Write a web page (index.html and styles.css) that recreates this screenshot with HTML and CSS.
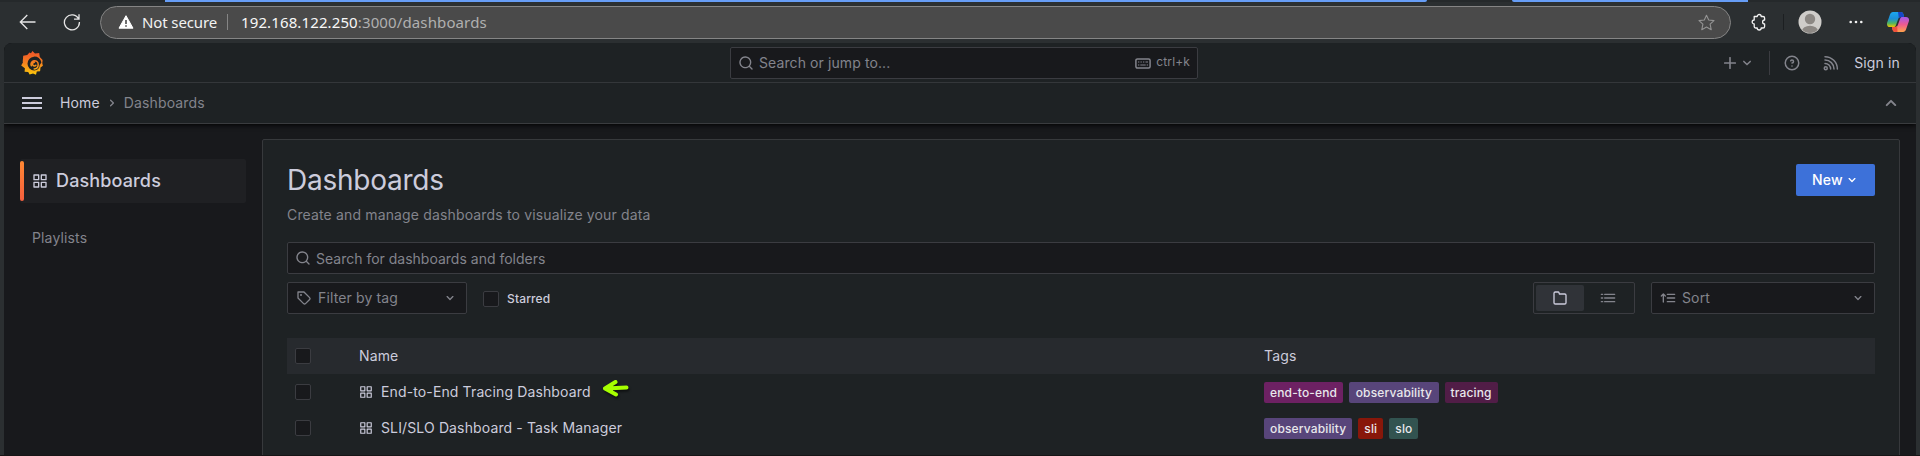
FILE: index.html
```html
<!DOCTYPE html>
<html lang="en">
<head>
<meta charset="utf-8">
<title>Dashboards - Grafana</title>
<link rel="stylesheet" href="styles.css">
</head>
<body>
<svg class="defs" width="0" height="0">
  <defs>
    <symbol id="apps" viewBox="0 0 24 24"><path fill="currentColor" d="M10,13H3a1,1,0,0,0-1,1v7a1,1,0,0,0,1,1h7a1,1,0,0,0,1-1V14A1,1,0,0,0,10,13ZM9,20H4V15H9ZM21,2H14a1,1,0,0,0-1,1v7a1,1,0,0,0,1,1h7a1,1,0,0,0,1-1V3A1,1,0,0,0,21,2ZM20,9H15V4h5Zm1,4H14a1,1,0,0,0-1,1v7a1,1,0,0,0,1,1h7a1,1,0,0,0,1-1V14A1,1,0,0,0,21,13Zm-1,7H15V15h5ZM10,2H3A1,1,0,0,0,2,3v7a1,1,0,0,0,1,1h7a1,1,0,0,0,1-1V3A1,1,0,0,0,10,2ZM9,9H4V4H9Z"/></symbol>
    <symbol id="search" viewBox="0 0 24 24"><path fill="currentColor" d="M21.71,20.29,18,16.61A9,9,0,1,0,16.61,18l3.68,3.68a1,1,0,0,0,1.42,0A1,1,0,0,0,21.71,20.29ZM11,18a7,7,0,1,1,7-7A7,7,0,0,1,11,18Z"/></symbol>
    <symbol id="down" viewBox="0 0 24 24"><path fill="currentColor" d="M17,9.17a1,1,0,0,0-1.41,0L12,12.71,8.46,9.17a1,1,0,0,0-1.41,0,1,1,0,0,0,0,1.42l4.24,4.24a1,1,0,0,0,1.42,0L17,10.59A1,1,0,0,0,17,9.17Z"/></symbol>
    <symbol id="up" viewBox="0 0 24 24"><path fill="currentColor" d="M17,13.41,12.71,9.17a1,1,0,0,0-1.42,0L7.05,13.41a1,1,0,0,0,0,1.42,1,1,0,0,0,1.41,0L12,11.29l3.54,3.54a1,1,0,0,0,.7.29,1,1,0,0,0,.71-.29A1,1,0,0,0,17,13.41Z"/></symbol>
    <symbol id="right" viewBox="0 0 24 24"><path fill="currentColor" d="M14.83,11.29,10.59,7.05a1,1,0,0,0-1.42,0,1,1,0,0,0,0,1.41L12.71,12,9.17,15.54a1,1,0,0,0,0,1.41,1,1,0,0,0,.71.29,1,1,0,0,0,.71-.29l4.24-4.24A1,1,0,0,0,14.83,11.29Z"/></symbol>
    <linearGradient id="flame" gradientUnits="userSpaceOnUse" x1="0" y1="0" x2="0" y2="24"><stop offset="0.1" stop-color="#f05a28"/><stop offset="0.5" stop-color="#f58220"/><stop offset="1" stop-color="#fbca0a"/></linearGradient>
    <linearGradient id="cpA" x1="0" y1="0" x2="0" y2="1"><stop offset="0" stop-color="#1ba7f0"/><stop offset="0.45" stop-color="#1c8fd8"/><stop offset="0.75" stop-color="#4fb55f"/><stop offset="1" stop-color="#f2c500"/></linearGradient>
    <linearGradient id="cpB" x1="0" y1="0" x2="0" y2="1"><stop offset="0" stop-color="#a259ee"/><stop offset="0.5" stop-color="#ee5a90"/><stop offset="1" stop-color="#ffa34a"/></linearGradient>
  </defs>
</svg>
<div class="browser">
  <div class="tabstrip"><span class="tabline tabline-a"></span><span class="tabline tabline-b"></span></div>
  <div class="toolbar">
    <svg class="back" width="18" height="16" viewBox="0 0 18 16"><path d="M16.5 8H1.5M8.3 1L1.3 8l7 7" fill="none" stroke="#e6e6e6" stroke-width="1.3"/></svg>
    <svg class="reload" width="18" height="18" viewBox="0 0 18 18"><path d="M15.7 6.2A7.5 7.5 0 1 0 16.4 9M16 1.2v5h-5" fill="none" stroke="#e6e6e6" stroke-width="1.3"/></svg>
    <div class="address">
      <svg class="warn" width="16" height="14" viewBox="0 0 16 14"><path d="M8 .7L15 13.2H1z" fill="#fff" stroke="#fff" stroke-linejoin="round"/><path d="M8 5v4M8 10.2v1.6" stroke="#4a4a4a" stroke-width="1.6"/></svg>
      <span class="insecure">Not secure</span>
      <span class="divider"></span>
      <span class="url"><b>192.168.122.250</b>:3000/dashboards</span>
      <svg class="star" width="17" height="17" viewBox="0 0 17 17"><path d="M8.5 1.2l2.2 4.8 5.3.6-3.9 3.6 1.1 5.5-4.7-2.7-4.7 2.7 1.1-5.5L1 6.600l5.300-.6z" fill="none" stroke="#949494" stroke-width="1.1" stroke-linejoin="round"/></svg>
    </div>
    <svg class="puzzle" width="16" height="18" viewBox="0 0 16 18"><path d="M3.200 3.500h3a2 2 0 0 1 4 0H12a1.600 1.600 0 0 1 1.600 1.600V7a2 2 0 0 0 0 4v2.400A1.600 1.600 0 0 1 12 15h-1.800a2 2 0 0 1-4 0H4.800a1.600 1.600 0 0 1-1.600-1.600V11a2 2 0 0 1 0-4z" fill="none" stroke="#f2f2f2" stroke-width="1.300" stroke-linejoin="round"/></svg>
    <span class="tool-divider"></span>
    <svg class="avatar" width="24" height="24" viewBox="0 0 24 24"><clipPath id="avc"><circle cx="12" cy="12" r="11"/></clipPath><circle cx="12" cy="12" r="11.500" fill="#cfcdca"/><circle cx="12" cy="9" r="5.200" fill="#8c8884"/><ellipse cx="12" cy="21" rx="8" ry="5.200" fill="#8c8884" clip-path="url(#avc)"/></svg>
    <svg class="more" width="14" height="4" viewBox="0 0 14 4"><g fill="#f2f2f2"><circle cx="1.700" cy="2" r="1.300"/><circle cx="7" cy="2" r="1.300"/><circle cx="12.300" cy="2" r="1.300"/></g></svg>
    <svg class="copilot" width="22" height="20" viewBox="0 0 22 20"><path d="M6 0h8c1.500 0 2 1 2.500 2.500L17 5h-3c-2 0-2.500 1-3 2.500L9 13c-.6 1.700-1.200 2-3 2H3c-2.500 0-3.500-2-2.800-4.500L3 2.500C3.500 1 4.500 0 6 0z" fill="url(#cpA)"/><path d="M11 0h3c1.500 0 2 1 2.500 2.500L17 5h-3c-1 0-1.700.3-2.200 1z" fill="#1746c8"/><path d="M16 20H8c-1.500 0-2-1-2.500-2.500L5 15h3c2 0 2.500-1 3-2.500L13 7c.6-1.700 1.200-2 3-2h3c2.500 0 3.500 2 2.800 4.500L19 17.500c-.5 1.500-1.500 2.500-3 2.500z" fill="url(#cpB)"/><path d="M10.500 20H8c-1.500 0-2-1-2.500-2.500L5 15h3c1 0 1.700-.3 2.200-1z" fill="#f0503c"/></svg>
  </div>
</div>
<div class="app">
  <header class="header">
    <div class="topbar">
      <svg class="logo" width="22" height="24" viewBox="0 0 22 24"><path fill="url(#flame)" d="M11.400 0L14 2.500l4.200-.6.600 4L21.600 9l-.3 3.200.6 2.600-2.400 1.800-.4 3.600-3.300.3L15 23.800l-3-1.200-3.400.8-1.400-2.400-3.600-.3.300-3.400L.2 14.500 2 11.300l-.3-.6L2.200 4.800l4-.8L8.500 1.600l1.500.6z"/><path d="M20.400 11.500A7 7 0 1 0 13.200 19.600 6 6 0 0 0 18.700 14z" fill="#1e2224"/><path d="M14.900 14.300a1.900 1.900 0 1 1-1.500-3.100M10.300 14.700a3.600 3.600 0 1 1 6.900-1.300c0 2.500-1.700 4.300-4 4.600" fill="none" stroke="url(#flame)" stroke-width="1.500" stroke-linecap="round"/></svg>
      <div class="jump">
        <svg class="i16" viewBox="0 0 24 24"><use href="#search"/></svg>
        <span class="jump-text">Search or jump to...</span>
        <svg class="keyboard" width="16" height="11" viewBox="0 0 16 11"><rect x=".9" y=".9" width="14.200" height="9.200" rx="1.500" fill="none" stroke="currentColor" stroke-width="1.500"/><path d="M3 4h1.300M5.500 4h1.300M8 4h1.300M10.500 4h2.500M3 7h1.300M5.300 7h5.400M11.700 7H13" stroke="currentColor" stroke-width="1.200"/></svg>
        <span class="kbd">ctrl+k</span>
      </div>
      <div class="actions">
        <svg class="plus" width="12" height="12" viewBox="0 0 12 12"><path d="M6 .7v10.600M.7 6h10.600" stroke="currentColor" stroke-width="1.600" stroke-linecap="round"/></svg>
        <svg class="i18 plus-down" viewBox="0 0 24 24"><use href="#down"/></svg>
        <span class="bar-divider"></span>
        <svg class="i18 help" viewBox="0 0 24 24"><path fill="currentColor" d="M11.290,15.290a1.580,1.580,0,0,0-.12.150.76.760,0,0,0-.09.180.64.640,0,0,0-.06.180,1.360,1.360,0,0,0,0,.2.840.840,0,0,0,.08.380.9.900,0,0,0,.54.540.94.940,0,0,0,.76,0,.9.900,0,0,0,.54-.54A1,1,0,0,0,13,16a1,1,0,0,0-.29-.71A1,1,0,0,0,11.290,15.290ZM12,2A10,10,0,1,0,22,12,10,10,0,0,0,12,2Zm0,18a8,8,0,1,1,8-8A8,8,0,0,1,12,20ZM12,7A3,3,0,0,0,9.400,8.500a1,1,0,1,0,1.730,1A1,1,0,0,1,12,9a1,1,0,0,1,0,2,1,1,0,1,0,0,2,3,3,0,0,0,0-6Z"/></svg>
        <svg class="i18 rss" viewBox="0 0 24 24"><g fill="none" stroke="currentColor" stroke-width="2" stroke-linecap="round"><circle cx="5" cy="19" r="2"/><path d="M4 12.500A7.500 7.500 0 0 1 11.500 20M4 8A12 12 0 0 1 16 20M4 3.500A16.500 16.500 0 0 1 20.500 20"/></g></svg>
        <span class="signin">Sign in</span>
      </div>
    </div>
    <nav class="crumbs">
      <svg class="menu" width="20" height="12" viewBox="0 0 20 12"><path d="M0 1h20M0 6h20M0 11h20" stroke="#ccccdc" stroke-width="2"/></svg>
      <span class="home">Home</span>
      <svg class="i16" viewBox="0 0 24 24"><use href="#right"/></svg>
      <span class="current">Dashboards</span>
      <svg class="collapse" viewBox="0 0 24 24"><use href="#up"/></svg>
    </nav>
  </header>
  <div class="body">
    <aside class="sidebar">
      <div class="section"><span class="accent"></span><svg class="i16" viewBox="0 0 24 24"><use href="#apps"/></svg><span>Dashboards</span></div>
      <div class="playlists">Playlists</div>
    </aside>
    <main class="panel">
      <div class="heading"><h1>Dashboards</h1><button class="new"><span>New</span><svg class="i16" viewBox="0 0 24 24"><use href="#down"/></svg></button></div>
      <p class="subtitle">Create and manage dashboards to visualize your data</p>
      <div class="field search"><svg class="i16" viewBox="0 0 24 24"><use href="#search"/></svg><span>Search for dashboards and folders</span></div>
      <div class="filters">
        <div class="field tagfilter"><svg class="i16" viewBox="0 0 24 24"><path fill="currentColor" d="M7.500,6A1.500,1.500,0,1,0,9,7.500,1.500,1.500,0,0,0,7.500,6Zm13.620,4.710L12.710,2.290A1,1,0,0,0,12,2H3A1,1,0,0,0,2,3v9a1,1,0,0,0,.29.710l8.420,8.410a3,3,0,0,0,4.240,0L21.120,15a3,3,0,0,0,0-4.240Zm-1.410,2.820h0l-6.180,6.170a1,1,0,0,1-1.410,0L4,11.590V4h7.590l8.120,8.120a1,1,0,0,1,.29.710A1,1,0,0,1,19.710,13.530Z"/></svg><span class="grow">Filter by tag</span><svg class="i16" viewBox="0 0 24 24"><use href="#down"/></svg></div>
        <span class="check"></span><span class="starred">Starred</span>
        <div class="toggle"><span class="on"><svg class="i16" viewBox="0 0 24 24"><path d="M5 3h4.200c.6 0 1.100.4 1.300 1l.7 2H19a2 2 0 0 1 2 2v11a2 2 0 0 1-2 2H5a2 2 0 0 1-2-2V5a2 2 0 0 1 2-2z" fill="none" stroke="currentColor" stroke-width="2"/></svg></span><span class="off"><svg class="i16" viewBox="0 0 24 24"><path d="M2 6.500h2M2 12h2M2 17.500h2M7 6.500h15M7 12h15M7 17.500h15" stroke="currentColor" stroke-width="2" stroke-linecap="round"/></svg></span></div>
        <div class="field sort"><svg class="i16" viewBox="0 0 24 24"><path d="M5 18V7M2 9l3-3 3 3M11 6.500h11M11 12h11M11 17.500h11" fill="none" stroke="currentColor" stroke-width="2" stroke-linecap="round" stroke-linejoin="round"/></svg><span class="grow">Sort</span><svg class="i16" viewBox="0 0 24 24"><use href="#down"/></svg></div>
      </div>
      <div class="table">
        <div class="row head"><span class="check"></span><span class="name">Name</span><span class="tags">Tags</span></div>
        <div class="row"><span class="check"></span><span class="name"><svg class="i14" viewBox="0 0 24 24"><use href="#apps"/></svg>End-to-End Tracing Dashboard<svg class="arrow" width="30" height="20" viewBox="0 0 30 20"><path d="M16.500 3L6 9.500l11 6M7 9.500l20.500-1" fill="none" stroke="#a6ff00" stroke-width="4" stroke-linecap="round" stroke-linejoin="round"/><path d="M5.500 9.500L14 4.500v9z" fill="#a6ff00"/></svg></span><span class="tags"><i class="tag magenta">end-to-end</i><i class="tag violet wide">observability</i><i class="tag plum">tracing</i></span></div>
        <div class="row"><span class="check"></span><span class="name"><svg class="i14" viewBox="0 0 24 24"><use href="#apps"/></svg>SLI/SLO Dashboard - Task Manager</span><span class="tags"><i class="tag violet">observability</i><i class="tag red">sli</i><i class="tag teal">slo</i></span></div>
      </div>
    </main>
  </div>
</div>
</body>
</html>
```
FILE: styles.css
```css
* { box-sizing: border-box; }
body { margin: 0; width: 1920px; height: 456px; overflow: hidden; display: flex; flex-direction: column; background: #2b2f31; border-bottom: 1px solid #171516; color: #ccccdc; font: 400 14px/22px Inter, "Liberation Sans", sans-serif; letter-spacing: 0.14px; }
svg { display: block; flex: none; }
.defs { position: absolute; }
.i16 { width: 16px; height: 16px; }
.i18 { width: 18px; height: 18px; }
.i14 { width: 14px; height: 14px; }

.browser { height: 43px; flex: none; }
.tabstrip { height: 2px; display: flex; background: #25292b; padding-left: 165px; }
.tabline { background: #669df6; height: 2px; }
.tabline-a { width: 1262px; border-radius: 0 0 3px 0; }
.tabline-b { width: 236px; margin-left: 85px; border-radius: 0 0 0 3px; }
.toolbar { height: 41px; display: flex; align-items: center; padding: 0 11px 1px 19px; font-family: "Noto Sans", sans-serif; font-size: 15px; letter-spacing: 0; }
.reload { margin-left: 26px; }
.address { width: 1631px; height: 33px; margin-left: 19px; display: flex; align-items: center; border: 1px solid #858585; border-radius: 17px; background: #4a4a4a; padding: 0 15px 0 17px; }
.insecure { margin-left: 8px; color: #f2f2f2; width: 74px; white-space: nowrap; letter-spacing: -0.12px; }
.divider { width: 1px; height: 16px; background: #858585; margin: 0 13px 0 11px; }
.url { color: #b0b0b0; flex: 1; letter-spacing: 0.12px; }
.url b { font-weight: 400; color: #f8f8f8; }
.puzzle { margin-left: 20px; }
.tool-divider { width: 1px; height: 16px; background: #1c1f21; margin: 0 14px 0 16px; }
.more { margin-left: 27px; }
.copilot { margin-left: 24px; }

.app { width: 1912px; margin-left: 4px; flex: 1; min-height: 0; border-radius: 8px 8px 0 0; overflow: hidden; background: #18191c; display: flex; flex-direction: column; }
.header { height: 81px; flex: none; background: #1e2224; border-bottom: 1px solid #3a3c3f; box-shadow: 0 1px 5px #000; position: relative; }
.topbar { height: 40px; border-bottom: 1px solid #34373a; display: grid; grid-template-columns: 1fr 468px 1fr; align-items: center; padding: 0 9px 0 17px; }
.jump { height: 32px; margin-top: 1px; border: 1px solid #3b3c41; border-radius: 2px; background: #18191c; display: flex; align-items: center; padding: 0 7px; color: #83848c; }
.jump-text { margin-left: 5px; flex: 1; letter-spacing: 0.1px; }
.kbd { font-size: 12px; margin-left: 5px; padding-bottom: 2px; }
.actions { display: flex; align-items: center; justify-content: flex-end; color: #83848c; padding-right: 7px; }
.plus-down { margin-left: 2px; }
.bar-divider { width: 1px; height: 24px; background: #3b3c41; margin: 0 13px; }
.rss { margin-left: 21px; }
.signin { color: #ccccdc; margin-left: 14px; }
.crumbs { height: 40px; display: flex; align-items: center; padding: 0 13px 0 18px; color: #83848c; }
.home { color: #ccccdc; margin: 0 4px 0 18px; }
.current { flex: 1; margin-left: 4px; }
.collapse { width: 24px; height: 24px; }

.body { flex: 1; min-height: 0; display: flex; padding: 15px 16px 0; }
.sidebar { width: 226px; margin-right: 16px; padding-top: 20px; }
.section { height: 44px; border-radius: 2px; background: #1f2023; display: flex; align-items: center; font-size: 18px; font-weight: 500; }
.accent { width: 4px; height: 40px; border-radius: 2px; background: linear-gradient(#ff8833, #f55f3e); margin-right: 8px; }
.section svg + span { margin-left: 8px; }
.playlists { margin: 24px 0 0 12px; color: #83848c; }
.panel { width: 1638px; height: 400px; border: 1px solid #37393c; border-radius: 2px; background: #1e2224; padding: 24px; }
.heading { height: 32px; display: flex; justify-content: space-between; align-items: center; }
h1 { margin: 0; font-size: 28px; line-height: 32px; font-weight: 400; letter-spacing: -0.25px; }
.new { width: 79px; height: 32px; border: 0; border-radius: 2px; background: #3d71d9; color: #fff; font: 500 14px/22px Inter, sans-serif; letter-spacing: 0.15px; display: flex; align-items: center; padding: 0 16px; }
.new span { padding-bottom: 1px; }
.new svg { margin-left: 1px; }
.subtitle { margin: 8px 0 16px; color: #83848c; letter-spacing: 0.15px; }
.field { height: 32px; border: 1px solid #3b3c41; border-radius: 2px; background: #18191c; color: #83848c; display: flex; align-items: center; padding: 0 8px; }
.search { padding-left: 7px; }
.search span { margin-left: 5px; padding-top: 1px; letter-spacing: 0; }
.filters { display: flex; align-items: center; margin-top: 8px; }
.tagfilter { width: 180px; }
.grow { flex: 1; margin-left: 6px; }
.check { width: 16px; height: 16px; flex: none; border: 1px solid #3b3c41; border-radius: 2px; background: #18191c; }
.filters .check { margin: 2px 8px 0 16px; }
.starred { font-size: 12px; font-weight: 500; padding-top: 2px; }
.toggle { width: 102px; height: 32px; margin-left: auto; border: 1px solid #3b3c41; border-radius: 2px; padding: 2px; display: flex; }
.toggle span { width: 48px; display: flex; align-items: center; justify-content: center; border-radius: 2px; color: #83848c; }
.toggle .on { background: #303338; color: #ccccdc; }
.sort { width: 224px; margin-left: 16px; }
.table { margin-top: 24px; }
.row { height: 36px; display: grid; grid-template-columns: 72px 905px 1fr; align-items: center; }
.row .check { margin-left: 8px; }
.head { background: #272a2e; }
.name { display: flex; align-items: center; letter-spacing: 0.13px; }
.name .i14 { margin-right: 8px; }
.arrow { margin: -6px 0 0 8px; filter: drop-shadow(1px 2px 1px #0008); }
.tags { display: flex; gap: 6px; }
.tag { height: 21px; font: 500 12px/21px Inter, sans-serif; letter-spacing: 0.15px; color: #e8e8ec; border-radius: 2px; padding: 0 6px; }
.wide { padding: 0 6.500px; }
.magenta { background: #6d2163; }
.violet { background: #58457a; }
.plum { background: #511d47; }
.red { background: #88170a; }
.teal { background: #325350; }
```
